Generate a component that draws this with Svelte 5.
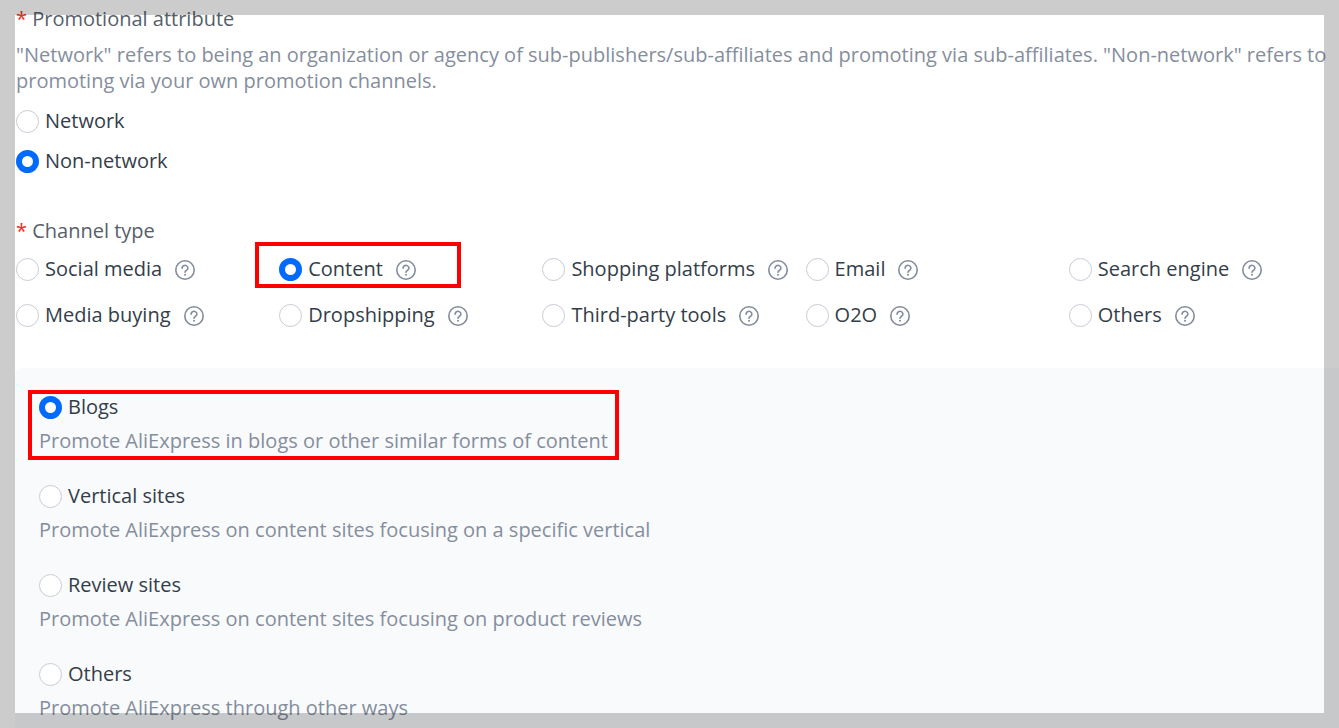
<!-- Channel form: promotional attribute, channel type and content options -->
<script lang="ts">
    type Choice = { value: string; label: string };
    type ContentOption = Choice & { description: string };

    const attributes: Choice[] = [
        { value: 'network', label: 'Network' },
        { value: 'non-network', label: 'Non-network' }
    ];

    const channels: Choice[] = [
        { value: 'social', label: 'Social media' },
        { value: 'content', label: 'Content' },
        { value: 'shopping', label: 'Shopping platforms' },
        { value: 'email', label: 'Email' },
        { value: 'search', label: 'Search engine' },
        { value: 'media', label: 'Media buying' },
        { value: 'dropshipping', label: 'Dropshipping' },
        { value: 'tools', label: 'Third-party tools' },
        { value: 'o2o', label: 'O2O' },
        { value: 'others', label: 'Others' }
    ];

    const contentOptions: ContentOption[] = [
        {
            value: 'blogs',
            label: 'Blogs',
            description: 'Promote AliExpress in blogs or other similar forms of content'
        },
        {
            value: 'vertical',
            label: 'Vertical sites',
            description: 'Promote AliExpress on content sites focusing on a specific vertical'
        },
        {
            value: 'review',
            label: 'Review sites',
            description: 'Promote AliExpress on content sites focusing on product reviews'
        },
        {
            value: 'others',
            label: 'Others',
            description: 'Promote AliExpress through other ways'
        }
    ];

    let attribute = $state('non-network');
    let channel = $state('content');
    let contentType = $state('blogs');
</script>

<main class="page">
    <form class="form">
        <fieldset class="attributes">
            <legend><span class="required">*</span> Promotional attribute</legend>
            <p class="hint">
                "Network" refers to being an organization or agency of sub-publishers/sub-affiliates and
                promoting via sub-affiliates. "Non-network" refers to promoting via your own promotion channels.
            </p>
            <div class="stack">
                {#each attributes as item}
                    <label class="choice">
                        <input type="radio" name="attribute" value={item.value} bind:group={attribute} />
                        {item.label}
                    </label>
                {/each}
            </div>
        </fieldset>

        <fieldset class="channels">
            <legend><span class="required">*</span> Channel type</legend>
            <div class="grid">
                {#each channels as item}
                    <div class="channel" class:marked={item.value === channel}>
                        <label class="choice">
                            <input type="radio" name="channel" value={item.value} bind:group={channel} />
                            {item.label}
                        </label>
                        <button type="button" class="help" aria-label="About {item.label}">
                            <svg viewBox="0 0 20 20" width="20" height="20" aria-hidden="true">
                                <circle cx="10" cy="10" r="9.2" />
                                <path d="M7.1 8.2V8a2.9 2.7 0 1 1 4.6 2.2c-1 .7-1.7 1-1.7 2.1" />
                                <circle class="dot" cx="10" cy="14.8" r="1" />
                            </svg>
                        </button>
                    </div>
                {/each}
            </div>
        </fieldset>
    </form>

    <section class="panel">
        {#each contentOptions as item}
            <div class="option" class:marked={item.value === contentType}>
                <label class="choice">
                    <input type="radio" name="content-type" value={item.value} bind:group={contentType} />
                    {item.label}
                </label>
                <p class="hint">{item.description}</p>
            </div>
        {/each}
    </section>

    <div class="frame"></div>
</main>

<style>
    :global(body) {
        background: #fff;
    }

    .page {
        position: relative;
        display: flex;
        flex-direction: column;
        height: 100vh;
        overflow: hidden;
        box-sizing: border-box;
        padding-top: 6px;
        font-family: 'Open Sans', 'Noto Sans', sans-serif;
        font-size: 20px;
        line-height: 26px;
        color: #333e49;
    }

    .form {
        padding: 0 7px 0 16px;
    }

    fieldset {
        margin: 0;
        padding: 0;
        border: 0;
        min-width: 0;
    }

    legend {
        padding: 0;
        color: #56606b;
    }

    .required {
        color: #f02a1a;
    }

    .hint {
        margin: 0;
        color: #858e9d;
    }

    .attributes .hint {
        margin-top: 10px;
    }

    .stack {
        display: grid;
        gap: 10px;
        margin-top: 12px;
    }

    .choice {
        display: flex;
        align-items: center;
        gap: 6px;
        height: 30px;
        cursor: pointer;
    }

    input {
        appearance: none;
        flex: none;
        width: 23px;
        height: 23px;
        margin: 0;
        border: 1px solid #c8ccd5;
        border-radius: 50%;
        background: #fff;
        cursor: pointer;
    }

    input:checked {
        border: 6px solid #006aff;
    }

    .channels {
        margin-top: 42px;
    }

    .grid {
        display: grid;
        grid-template-columns: repeat(5, 1fr);
        row-gap: 16px;
        margin-top: 10px;
    }

    .channel {
        position: relative;
        display: flex;
        align-items: center;
        gap: 13px;
    }

    .help {
        display: flex;
        margin: 2px 0 0;
        padding: 0;
        border: 0;
        background: none;
        cursor: pointer;
    }

    .help svg {
        fill: none;
        stroke: #838c9b;
        stroke-width: 1.6;
        stroke-linecap: round;
    }

    .help .dot {
        fill: #838c9b;
        stroke: none;
    }

    .panel {
        flex: 1 0 auto;
        display: flex;
        flex-direction: column;
        align-items: flex-start;
        gap: 27px;
        margin: 38px 0 0 15px;
        padding: 24px;
        border-radius: 8px 0 0 0;
        background: #f9fafc;
    }

    .option {
        position: relative;
    }

    .option .hint {
        margin-top: 6px;
    }

    /* red call-out boxes around the selected entries */
    .marked::after {
        content: '';
        position: absolute;
        border: 4px solid #f00;
        pointer-events: none;
    }

    .channel.marked::after {
        inset: -12px 81px -4px -24px;
    }

    .option.marked::after {
        inset: -2px -11px -6px -11px;
    }

    /* translucent border over the whole page */
    .frame {
        position: absolute;
        inset: 0;
        border: 15px solid rgba(0, 0, 0, 0.2);
        pointer-events: none;
    }
</style>
